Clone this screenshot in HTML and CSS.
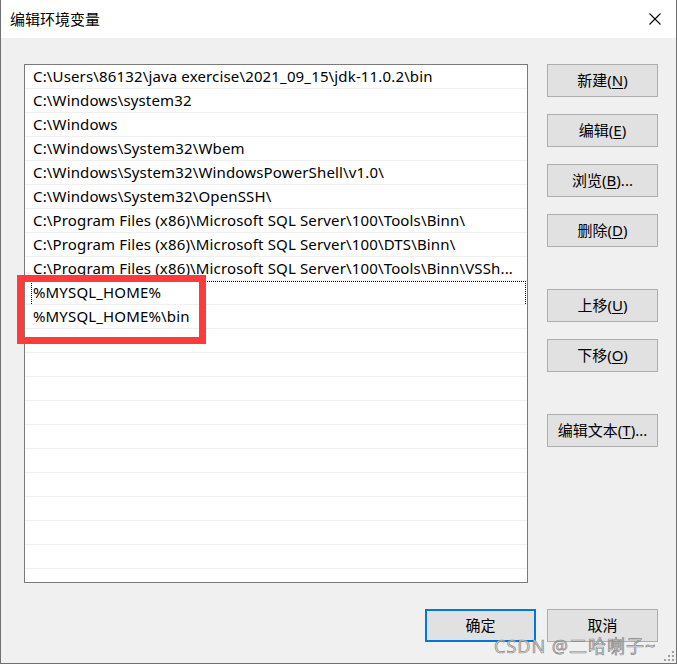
FILE: index.html
```html
<!DOCTYPE html>
<html lang="zh-CN">
<head>
<meta charset="utf-8">
<title>编辑环境变量</title>
<link rel="stylesheet" href="styles.css">
</head>
<body>
<div class="window">
  <div class="titlebar">
    <span class="title">编辑环境变量</span>
    <svg class="close" width="12" height="12" viewBox="0 0 12 12"><path d="M0.5 0.5 L11.5 11.5 M11.5 0.5 L0.5 11.5" stroke="#000" stroke-width="1.1" fill="none"/></svg>
  </div>
  <div class="main">
    <div class="list">
      <div class="row">C:\Users\86132\java exercise\2021_09_15\jdk-11.0.2\bin</div>
      <div class="row">C:\Windows\system32</div>
      <div class="row">C:\Windows</div>
      <div class="row">C:\Windows\System32\Wbem</div>
      <div class="row">C:\Windows\System32\WindowsPowerShell\v1.0\</div>
      <div class="row">C:\Windows\System32\OpenSSH\</div>
      <div class="row">C:\Program Files (x86)\Microsoft SQL Server\100\Tools\Binn\</div>
      <div class="row">C:\Program Files (x86)\Microsoft SQL Server\100\DTS\Binn\</div>
      <div class="row">C:\Program Files (x86)\Microsoft SQL Server\100\Tools\Binn\VSSh...</div>
      <div class="row focus">%MYSQL_HOME%</div>
      <div class="row">%MYSQL_HOME%\bin</div>
      <div class="row"></div>
      <div class="row"></div>
      <div class="row"></div>
      <div class="row"></div>
      <div class="row"></div>
      <div class="row"></div>
      <div class="row"></div>
      <div class="row"></div>
      <div class="row"></div>
      <div class="row"></div>
      <div class="row"></div>
    </div>
    <div class="side">
      <button class="btn">新建(<u>N</u>)</button>
      <button class="btn">编辑(<u>E</u>)</button>
      <button class="btn">浏览(<u>B</u>)...</button>
      <button class="btn">删除(<u>D</u>)</button>
      <button class="btn gap">上移(<u>U</u>)</button>
      <button class="btn">下移(<u>O</u>)</button>
      <button class="btn gap">编辑文本(<u>T</u>)...</button>
    </div>
  </div>
  <div class="footer">
    <button class="btn default">确定</button>
    <button class="btn">取消</button>
  </div>
  <div class="highlight"></div>
  <div class="watermark">CSDN @二哈喇子~</div>
  <svg class="grip" width="12" height="12" viewBox="0 0 12 12">
    <g fill="#a0a0a0">
      <rect x="10" y="2" width="2" height="2"/>
      <rect x="6" y="6" width="2" height="2"/>
      <rect x="10" y="6" width="2" height="2"/>
      <rect x="2" y="10" width="2" height="2"/>
      <rect x="6" y="10" width="2" height="2"/>
      <rect x="10" y="10" width="2" height="2"/>
    </g>
  </svg>
</div>
</body>
</html>
```

FILE: styles.css
```css
* { box-sizing: border-box; }
html, body { margin: 0; padding: 0; }
body {
  width: 677px;
  height: 664px;
  overflow: hidden;
  font-family: "Noto Sans", "Noto Sans CJK SC", sans-serif;
  font-size: 15px;
  color: #000;
  background: #f0f0f0;
}
.window {
  position: relative;
  width: 677px;
  height: 664px;
  background: #f0f0f0;
  border-left: 1px solid #707070;
  border-right: 1px solid #707070;
  border-bottom: 1px solid #707070;
}
.titlebar {
  height: 38px;
  background: #fff;
  display: flex;
  align-items: center;
  justify-content: space-between;
  padding: 0 15px 0 9px;
}
.title {
  font-family: "Noto Sans CJK SC", sans-serif;
  font-size: 15px;
  line-height: 20px;
}
.close { display: block; }
.main {
  display: flex;
  gap: 19px;
  padding: 26px 18px 0 23px;
}
.list {
  width: 504px;
  height: 519px;
  background: #fff;
  border: 1px solid #7a7a7a;
  overflow: hidden;
  flex: none;
}
.row {
  position: relative;
  height: 24px;
  line-height: 23px;
  border-bottom: 1px solid #f0f0f0;
  padding-left: 8px;
  white-space: nowrap;
  overflow: hidden;
  letter-spacing: 0.15px;
}
.row.focus::after {
  content: "";
  position: absolute;
  top: 0;
  left: 6px;
  right: 1px;
  height: 23px;
  border: 1px dotted #000;
}
.side {
  display: flex;
  flex-direction: column;
  gap: 17px;
  width: 111px;
}
.btn {
  width: 111px;
  height: 33px;
  padding: 0 0 2px;
  margin: 0;
  background: #e1e1e1;
  border: 1px solid #adadad;
  font-family: "Noto Sans", "Noto Sans CJK SC", sans-serif;
  font-size: 15px;
  color: #000;
  line-height: 20px;
  text-align: center;
}
.btn u { text-underline-offset: 2px; }
.btn.gap { margin-top: 25px; }
.btn.default {
  border: 2px solid #0078d7;
}
.footer {
  display: flex;
  justify-content: flex-end;
  gap: 11px;
  padding: 26px 18px 0 0;
}
.highlight {
  position: absolute;
  left: 16px;
  top: 275px;
  width: 189px;
  height: 69px;
  border: 7px solid #fc3b3b;
}
.watermark {
  position: absolute;
  left: 493px;
  top: 636px;
  font-family: "Noto Sans", "Noto Sans CJK SC", sans-serif;
  font-size: 18px;
  line-height: 20px;
  letter-spacing: 1px;
  color: rgba(215, 215, 215, 0.85);
  -webkit-text-stroke: 0.7px rgba(120, 120, 120, 0.85);
  white-space: nowrap;
}
.grip {
  position: absolute;
  right: 2px;
  bottom: 2px;
}
```
